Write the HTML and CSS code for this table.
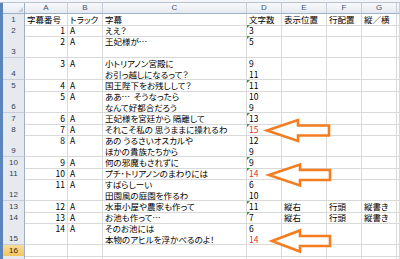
FILE: index.html
```html
<!DOCTYPE html>
<html lang="ja">
<head>
<meta charset="utf-8">
<link rel="stylesheet" href="styles.css">
</head>
<body>
<div class="app">
  <div class="topbar"></div>
  <div class="main">
    <div class="frame"></div>
    <div class="sheet">
      <div class="row colhdr">
        <div class="corner"><span class="corner-tri"></span></div>
        <div class="ch">A</div><div class="ch">B</div><div class="ch">C</div><div class="ch">D</div><div class="ch">E</div><div class="ch">F</div><div class="ch">G</div><div class="ch"></div>
      </div>
      <div class="row">
        <div class="rh">1</div>
        <div class="c">字幕番号</div><div class="c">トラック</div><div class="c">字幕</div><div class="c">文字数</div><div class="c">表示位置</div><div class="c">行配置</div><div class="c">縦／横</div><div class="c"></div>
      </div>
      <div class="row">
        <div class="rh">2</div>
        <div class="c num">1</div><div class="c">A</div><div class="c">ええ？</div><div class="c tri">3</div><div class="c"></div><div class="c"></div><div class="c"></div><div class="c"></div>
      </div>
      <div class="row tall">
        <div class="rh">3</div>
        <div class="c num">2</div><div class="c">A</div><div class="c">王妃様が…</div><div class="c tri">5</div><div class="c"></div><div class="c"></div><div class="c"></div><div class="c"></div>
      </div>
      <div class="row tall">
        <div class="rh">4</div>
        <div class="c num">3</div><div class="c">A</div><div class="c">小トリアノン宮殿に<br>お引っ越しになるって？</div><div class="c">9<br>11</div><div class="c"></div><div class="c"></div><div class="c"></div><div class="c"></div>
      </div>
      <div class="row">
        <div class="rh">5</div>
        <div class="c num">4</div><div class="c">A</div><div class="c">国王陛下をお残しして？</div><div class="c tri">11</div><div class="c"></div><div class="c"></div><div class="c"></div><div class="c"></div>
      </div>
      <div class="row tall">
        <div class="rh">6</div>
        <div class="c num">5</div><div class="c">A</div><div class="c">ああ…&nbsp; そうなったら<br>なんて好都合だろう</div><div class="c">10<br>9</div><div class="c"></div><div class="c"></div><div class="c"></div><div class="c"></div>
      </div>
      <div class="row">
        <div class="rh">7</div>
        <div class="c num">6</div><div class="c">A</div><div class="c">王妃様を宮廷から 隔離して</div><div class="c tri">13</div><div class="c"></div><div class="c"></div><div class="c"></div><div class="c"></div>
      </div>
      <div class="row">
        <div class="rh">8</div>
        <div class="c num">7</div><div class="c">A</div><div class="c">それこそ私の 思うままに操れるわ</div><div class="c tri red">15</div><div class="c"></div><div class="c"></div><div class="c"></div><div class="c"></div>
      </div>
      <div class="row tall">
        <div class="rh">9</div>
        <div class="c num">8</div><div class="c">A</div><div class="c">あの うるさいオスカルや<br>ほかの貴族たちから</div><div class="c">12<br>9</div><div class="c"></div><div class="c"></div><div class="c"></div><div class="c"></div>
      </div>
      <div class="row">
        <div class="rh">10</div>
        <div class="c num">9</div><div class="c">A</div><div class="c">何の邪魔もされずに</div><div class="c tri">9</div><div class="c"></div><div class="c"></div><div class="c"></div><div class="c"></div>
      </div>
      <div class="row">
        <div class="rh">11</div>
        <div class="c num">10</div><div class="c">A</div><div class="c">プチ･トリアノンのまわりには</div><div class="c tri red">14</div><div class="c"></div><div class="c"></div><div class="c"></div><div class="c"></div>
      </div>
      <div class="row tall">
        <div class="rh">12</div>
        <div class="c num">11</div><div class="c">A</div><div class="c">すばらしーい<br>田園風の庭園を作るわ</div><div class="c">6<br>10</div><div class="c"></div><div class="c"></div><div class="c"></div><div class="c"></div>
      </div>
      <div class="row">
        <div class="rh">13</div>
        <div class="c num">12</div><div class="c">A</div><div class="c">水車小屋や農家も作って</div><div class="c tri">11</div><div class="c">縦右</div><div class="c">行頭</div><div class="c">縦書き</div><div class="c"></div>
      </div>
      <div class="row">
        <div class="rh">14</div>
        <div class="c num">13</div><div class="c">A</div><div class="c">お池も作って…</div><div class="c tri">7</div><div class="c">縦右</div><div class="c">行頭</div><div class="c">縦書き</div><div class="c"></div>
      </div>
      <div class="row tall">
        <div class="rh">15</div>
        <div class="c num">14</div><div class="c">A</div><div class="c">そのお池には<br>本物のアヒルを浮かべるのよ！</div><div class="c">6<br><span class="red">14</span></div><div class="c"></div><div class="c"></div><div class="c"></div><div class="c"></div>
      </div>
      <div class="row">
        <div class="rh active">16</div>
        <div class="c"></div><div class="c"></div><div class="c"></div><div class="c"></div><div class="c"></div><div class="c"></div><div class="c"></div><div class="c"></div>
      </div>
      <div class="row">
        <div class="rh"></div>
        <div class="c"></div><div class="c"></div><div class="c"></div><div class="c"></div><div class="c"></div><div class="c"></div><div class="c"></div><div class="c"></div>
      </div>
    </div>
  </div>
  <svg class="arrows" width="400" height="259" viewBox="0 0 400 259">
    <polygon points="267,130.5 298,120 298,125.5 329,125.5 329,135.5 298,135.5 298,141" />
    <polygon points="269,175 300,164.5 300,170 330,170 330,180 300,180 300,185.5" />
    <polygon points="272,241 300,230.5 300,236 330,236 330,246 300,246 300,251.5" />
  </svg>
</div>
</body>
</html>
```
FILE: styles.css
```css
* { box-sizing: border-box; }
html, body { margin: 0; padding: 0; background: #fff; }
.app {
  position: relative;
  width: 400px;
  height: 259px;
  overflow: hidden;
  font-family: "Noto Sans CJK JP", "Noto Sans", sans-serif;
  font-size: 8.5px;
  font-feature-settings: "palt";
  color: #000;
}
.topbar {
  height: 3px;
  background: #f3f5f8;
  border-bottom: 1px solid #b9c3cf;
}
.main { display: flex; height: 256px; }
.frame { width: 3px; flex: none; background: #5a84bb; }
.sheet { flex: 1; display: flex; flex-direction: column; }
.row {
  display: grid;
  grid-template-columns: 22px 43px 35px 144px 35px 45px 35px 35px 1fr;
  height: 11px;
  flex: none;
}
.row.tall { height: 22px; }
.c {
  border-right: 1px solid #d9d9d9;
  border-bottom: 1px solid #d9d9d9;
  line-height: 11px;
  padding-left: 2px;
  white-space: nowrap;
  overflow: hidden;
  position: relative;
}
.c.num { text-align: right; padding-left: 0; padding-right: 2px; }
.red { color: #e0322d; }
.c.tri::before {
  content: "";
  position: absolute;
  left: 0;
  top: 0;
  border-top: 3px solid #2f9a2f;
  border-right: 3px solid transparent;
}
.colhdr { height: 11px; }
.corner {
  position: relative;
  background: linear-gradient(#f6f8fb, #e6ebf1);
  border-right: 1px solid #9eb0c5;
  border-bottom: 1px solid #9eb0c5;
}
.corner-tri {
  position: absolute;
  right: 1px;
  bottom: 1px;
  border-bottom: 5px solid #c3ccd7;
  border-left: 5px solid transparent;
}
.ch {
  background: linear-gradient(#f8f9fb, #e5eaf0);
  border-right: 1px solid #c5ceda;
  border-bottom: 1px solid #9eb0c5;
  text-align: center;
  line-height: 10px;
  font-family: "Liberation Sans", sans-serif;
  font-size: 8px;
  color: #3f5574;
}
.rh {
  background: #e6eaef;
  border-right: 1px solid #9eb0c5;
  border-bottom: 1px solid #c5ceda;
  display: flex;
  align-items: flex-end;
  justify-content: center;
  line-height: 11px;
  font-family: "Liberation Sans", sans-serif;
  font-size: 8px;
  color: #2e3f57;
}
.rh.active {
  background: linear-gradient(#f9dd96, #f2c561);
  border-bottom-color: #d9a93f;
  color: #3a2c00;
}
.arrows {
  position: absolute;
  left: 0;
  top: 0;
  pointer-events: none;
}
.arrows polygon {
  fill: #fff;
  stroke: #f47d22;
  stroke-width: 2.6;
  stroke-linejoin: miter;
}
```
